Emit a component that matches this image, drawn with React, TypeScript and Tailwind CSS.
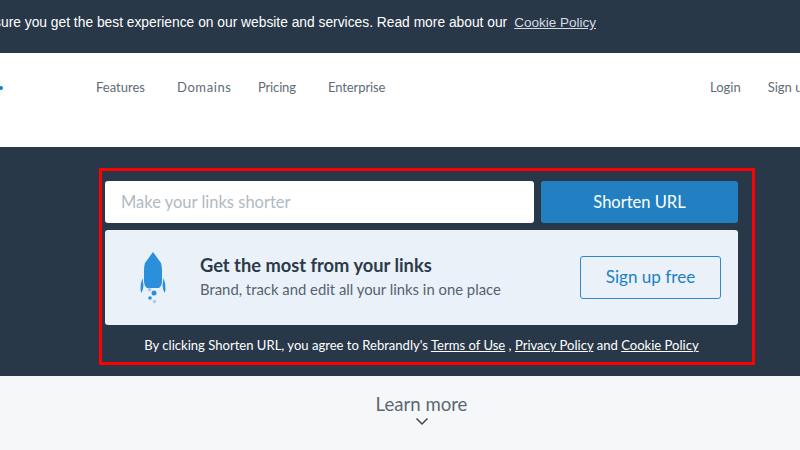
const uiFont = "font-['Lato','Noto_Sans',sans-serif]";

function Rocket() {
  return (
    <svg width="26" height="52" viewBox="0 0 26 52" className="shrink-0">
      <path d="M13 0 L21 11 Q22 14 22 18 L22 29 Q22 34 19 36 L7 36 Q4 34 4 29 L4 18 Q4 14 5 11 Z" fill="#2b8fdc" />
      <path d="M2.5 26 Q0 32 0.5 38 L1.5 41 Q3.5 37 3.5 33 Z" fill="#2b8fdc" />
      <path d="M23.5 26 Q26 32 25.5 38 L24.5 41 Q22.5 37 22.5 33 Z" fill="#2b8fdc" />
      <circle cx="9.5" cy="37.5" r="1.8" fill="#9fcbf0" />
      <circle cx="14" cy="41" r="2.5" fill="#2b8fdc" />
      <circle cx="10" cy="46" r="1.8" fill="#2b8fdc" />
      <circle cx="14.5" cy="49.5" r="1.7" fill="#9fcbf0" />
    </svg>
  );
}

export default function App() {
  return (
    <div className={`h-[450px] w-[800px] overflow-hidden bg-white ${uiFont}`}>
      <div className="flex h-[53px] items-center justify-end overflow-hidden bg-[#283849] pr-[204px] pb-[6px] font-['Liberation_Sans',sans-serif] text-[13.8px] whitespace-nowrap text-white">
        <span className="shrink-0">
          We use cookies to ensure you get the best experience on our website and services. Read more about our
          <a className="ml-[7px] text-[13.5px] text-[#d5dbe1] underline">Cookie Policy</a>
        </span>
      </div>

      <div className="flex h-[94px] items-start overflow-hidden bg-white pt-[25px] text-[13px] whitespace-nowrap text-[#5f6b76]">
        <div className="mt-[8px] h-[4px] w-[3px] shrink-0 rounded-r-full bg-[#1f80c4]" />
        <nav className="ml-[93px] flex">
          <a className="w-[81px]">Features</a>
          <a className="w-[81px] tracking-[0.6px]">Domains</a>
          <a className="w-[70px] tracking-[-0.15px]">Pricing</a>
          <a className="w-[56px] tracking-[-0.1px]">Enterprise</a>
        </nav>
        <div className="ml-[326px] flex shrink-0 gap-[27px]">
          <a>Login</a>
          <a>Sign up</a>
        </div>
      </div>

      <div className="h-[229px] bg-[#283849] pt-[21px] pl-[99px]">
        <div className="h-[197px] w-[656px] border-[3px] border-[#fe0000] px-[3px] pt-[10px]">
          <div className="flex gap-[7px]">
            <div className="flex h-[42px] w-[429px] items-center rounded-[3px] bg-white pl-[16px] text-[16.5px] text-[#b1b9c1]">
              Make your links shorter
            </div>
            <button className="h-[42px] w-[197px] rounded-[3px] bg-[#2280c2] text-[16.5px] text-white">
              Shorten URL
            </button>
          </div>

          <div className="mt-[7px] flex h-[95px] w-[633px] items-center rounded-[3px] bg-[#eaf1f9] pr-[17px] pl-[35px]">
            <Rocket />
            <div className="ml-[34px] flex-1">
              <div className="-mt-[3px] text-[18.3px] leading-[22px] font-bold text-[#2c3a49]">Get the most from your links</div>
              <div className="mt-[3px] text-[14.85px] leading-[20px] text-[#55626f]">
                Brand, track and edit all your links in one place
              </div>
            </div>
            <button className="h-[43px] w-[141px] rounded-[3px] border border-[#2c8ad0] pb-[2px] text-[17.1px] text-[#2280c2]">
              Sign up free
            </button>
          </div>

          <p className="mt-[12px] w-[633px] text-center text-[13.07px] leading-[16px] text-white">
            By clicking Shorten URL, you agree to Rebrandly's <a className="underline">Terms of Use</a> ,{' '}
            <a className="underline">Privacy Policy</a> and <a className="underline">Cookie Policy</a>
          </p>
        </div>
      </div>

      <div className="flex h-[74px] flex-col items-center bg-[#f6f7f9] pt-[17px] pl-[43px]">
        <div className="text-[18.6px] leading-[22px] text-[#5b6773]">Learn more</div>
        <svg width="14" height="9" viewBox="0 0 14 9" className="mt-[2px]">
          <path d="M1.5 1.5 L7 7 L12.5 1.5" fill="none" stroke="#3a4753" strokeWidth="1.5" />
        </svg>
      </div>
    </div>
  );
}
